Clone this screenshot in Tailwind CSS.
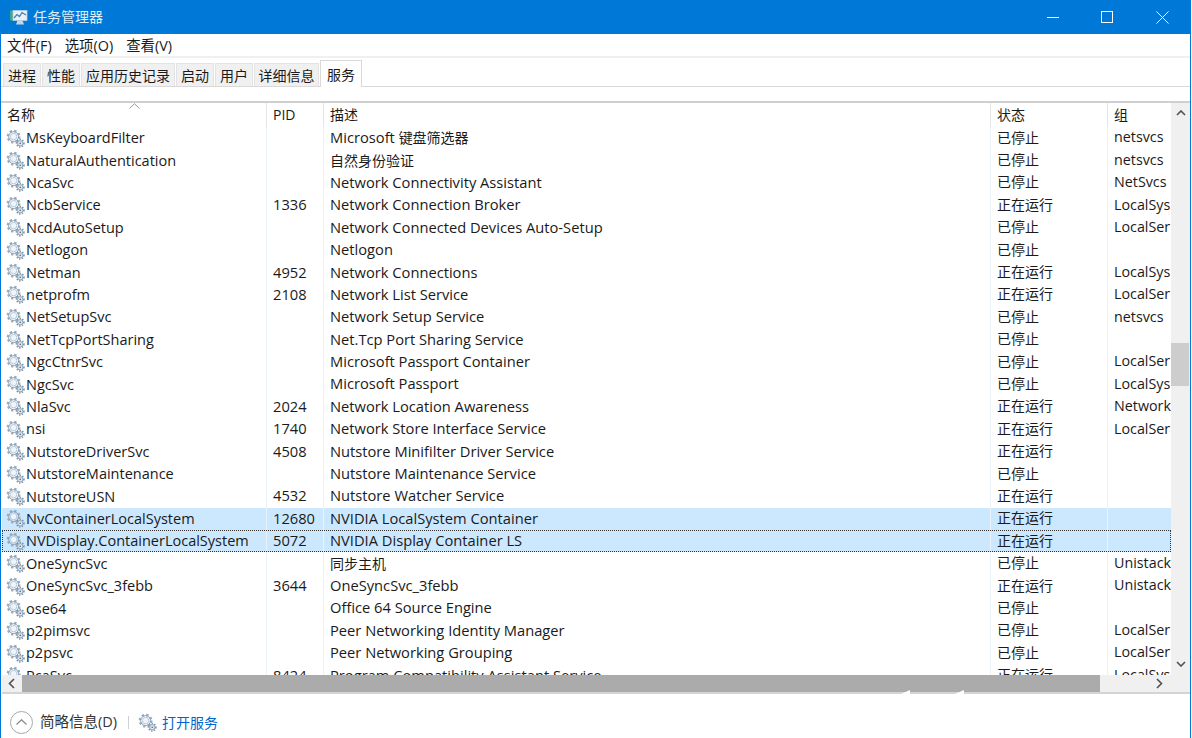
<!DOCTYPE html>
<html lang="zh-CN">
<head>
  <meta charset="UTF-8" />
  <title>任务管理器</title>
  <script src="https://cdn.jsdelivr.net/npm/@tailwindcss/browser@4"></script>
</head>
<body class="bg-white overflow-hidden font-['Open_Sans','Noto_Sans_CJK_SC',sans-serif] text-[14px] text-[#1a1a1a]">
  <svg class="hidden">
    <symbol id="gears" viewBox="0 0 20 20">
      <circle cx="8" cy="8" r="6" fill="none" stroke="#9aacbd" stroke-width="2.6" stroke-dasharray="2.4 2.3"/>
      <circle cx="8" cy="8" r="5.2" fill="none" stroke="#8a9fb3" stroke-width="1"/>
      <circle cx="8" cy="8" r="3.4" fill="#eef4fa" stroke="#b4c6d6" stroke-width="1"/>
      <circle cx="15" cy="15" r="3.8" fill="none" stroke="#7f94a9" stroke-width="1.8" stroke-dasharray="1.4 1.4"/>
      <circle cx="15" cy="15" r="2.8" fill="#dfe8f1" stroke="#8a9fb3" stroke-width="1"/>
      <circle cx="15" cy="15" r="0.9" fill="#5d7388"/>
    </symbol>
  </svg>

  <div class="w-[1191px] h-[738px] flex flex-col border-x border-[#0078d7]">
    <!-- title bar -->
    <div class="h-[34px] shrink-0 bg-[#0078d7] flex items-center text-white">
      <svg class="w-[19px] h-[17px] ml-[8px]" viewBox="0 0 19 17">
        <rect x="1" y="1.5" width="3" height="10" fill="#3fa58f"/>
        <rect x="4" y="1.5" width="14" height="10" fill="#e9f1f8" stroke="#b9cad9" stroke-width="0.8"/>
        <path d="M5 9 L8 5.5 L10.5 7.5 L13 3.5 L17 6" fill="none" stroke="#3d7fb8" stroke-width="1.2"/>
        <path d="M7 15.5 H15 L13.5 11.5 H8.500 Z" fill="#c9d6e2"/>
      </svg>
      <span class="ml-[5px] pb-[1px] text-[14px] text-[#dcecf9]">任务管理器</span>
      <div class="ml-auto flex items-center">
        <svg class="w-[12px] h-[12px] mr-[42px]" viewBox="0 0 12 12"><path d="M0 6.500H12" stroke="#fff" stroke-width="1"/></svg>
        <svg class="w-[12px] h-[12px] mr-[43px]" viewBox="0 0 12 12"><rect x="0.500" y="0.500" width="11" height="11" fill="none" stroke="#fff"/></svg>
        <svg class="w-[13px] h-[13px] mr-[21px]" viewBox="0 0 13 13"><path d="M0.500 0.500L12.500 12.500M12.500 0.500L0.500 12.500" stroke="#fff" stroke-width="1"/></svg>
      </div>
    </div>

    <!-- menu -->
    <div class="h-[24px] shrink-0 flex items-center gap-[13px] pl-[6px] pt-[2px] border-b-2 border-[#f0f0f0] text-[14.4px]">
      <span>文件(F)</span><span>选项(O)</span><span>查看(V)</span>
    </div>

    <!-- tabs -->
    <div class="h-[29px] shrink-0 flex items-end pl-[2px] gap-px border-b border-[#d9d9d9]">
      <div class="h-[23px] w-[38px] bg-[#f0f0f0] border border-b-0 border-[#e3e3e3] flex items-center justify-center">进程</div>
      <div class="h-[23px] w-[38px] bg-[#f0f0f0] border border-b-0 border-[#e3e3e3] flex items-center justify-center">性能</div>
      <div class="h-[23px] w-[94px] bg-[#f0f0f0] border border-b-0 border-[#e3e3e3] flex items-center justify-center">应用历史记录</div>
      <div class="h-[23px] w-[38px] bg-[#f0f0f0] border border-b-0 border-[#e3e3e3] flex items-center justify-center">启动</div>
      <div class="h-[23px] w-[38px] bg-[#f0f0f0] border border-b-0 border-[#e3e3e3] flex items-center justify-center">用户</div>
      <div class="h-[23px] w-[65px] bg-[#f0f0f0] border border-b-0 border-[#e3e3e3] flex items-center justify-center">详细信息</div>
      <div class="h-[27px] w-[42px] -mb-px bg-white border border-b-0 border-[#d9d9d9] flex items-center justify-center">服务</div>
    </div>

    <div class="h-[16px] shrink-0 border-b-2 border-[#cfcfcf]"></div>

    <!-- table + scrollbars -->
    <div class="relative h-[591px] shrink-0 flex flex-col border-b-2 border-[#d4d4d4] ml-[1px]">
      <div class="flex h-[572px] shrink-0">
        <div class="w-[1169px] flex flex-col relative overflow-hidden">
          <div class="h-[24px] shrink-0 grid grid-cols-[265px_57px_667px_117px_63px] items-stretch">
            <div class="pl-[5px] pb-[2px] flex items-center border-r border-[#e5e5e5]">名称</div>
            <div class="pl-[6px] pb-[2px] flex items-center border-r border-[#e5e5e5]">PID</div>
            <div class="pl-[6px] pb-[2px] flex items-center border-r border-[#e5e5e5]">描述</div>
            <div class="pl-[6px] pb-[2px] flex items-center border-r border-[#e5e5e5]">状态</div>
            <div class="pl-[6px] pb-[2px] flex items-center">组</div>
          </div>
          <svg class="absolute left-[127px] top-0 w-[11px] h-[6px]" viewBox="0 0 11 6"><path d="M0.500 5.500L5.500 0.700L10.500 5.500" fill="none" stroke="#9a9a9a"/></svg>
          <div id="rows" class="flex-1 overflow-hidden"></div>
        </div>
        <!-- vertical scrollbar -->
        <div class="w-[19px] bg-[#f0f0f0] flex flex-col items-center justify-between pt-[7px] pb-[8px] relative">
          <svg class="w-[10px] h-[6px]" viewBox="0 0 10 6"><path d="M1 5L5 1L9 5" fill="none" stroke="#505050" stroke-width="1.600"/></svg>
          <div class="absolute left-0 top-[240px] w-[18px] h-[43px] bg-[#cdcdcd]"></div>
          <svg class="w-[10px] h-[6px]" viewBox="0 0 10 6"><path d="M1 1L5 5L9 1" fill="none" stroke="#505050" stroke-width="1.600"/></svg>
        </div>
      </div>
      <!-- horizontal scrollbar -->
      <div class="h-[17px] bg-[#f0f0f0] flex items-center shrink-0">
        <div class="w-[20px] pr-[2px] flex justify-center">
          <svg class="w-[7px] h-[11px]" viewBox="0 0 7 11"><path d="M6 1L1.500 5.500L6 10" fill="none" stroke="#505050" stroke-width="1.600"/></svg>
        </div>
        <div class="w-[1078px] h-full bg-[#ababab]"></div>
        <div class="ml-auto w-[20px] mr-[21px] flex justify-center">
          <svg class="w-[7px] h-[11px]" viewBox="0 0 7 11"><path d="M1 1L5.500 5.500L1 10" fill="none" stroke="#505050" stroke-width="1.600"/></svg>
        </div>
      </div>
      <div class="absolute left-[899px] bottom-[-2px] w-[9px] h-[4px] bg-white [clip-path:polygon(100%_0,100%_100%,0_100%)]"></div>
      <div class="absolute left-[953px] bottom-[-2px] w-[9px] h-[4px] bg-white [clip-path:polygon(100%_0,100%_100%,0_100%)]"></div>
    </div>

    <!-- footer -->
    <div class="flex-1 flex items-center pt-[12px]">
      <div class="ml-[9px] w-[23px] h-[23px] rounded-full border border-[#a8a8a8] flex items-center justify-center">
        <svg class="w-[11px] h-[6px]" viewBox="0 0 11 6"><path d="M0.500 5.500L5.500 0.700L10.500 5.500" fill="none" stroke="#8a8a8a" stroke-width="1.200"/></svg>
      </div>
      <span class="ml-[7px] text-[#333] text-[14.5px]">简略信息(D)</span>
      <div class="ml-[11px] w-px h-[13px] bg-[#d0d0d0]"></div>
      <svg class="ml-[9px] w-[19px] h-[19px]"><use href="#gears"/></svg>
      <span class="ml-[5px] text-[#0066cc]">打开服务</span>
    </div>
  </div>

  <script>
    const STOP = "已停止";
    const RUN = "正在运行";
    const services = [
      ["MsKeyboardFilter", "", 'Microsoft <span class="text-[14px]">键盘筛选器</span>', STOP, "netsvcs"],
      ["NaturalAuthentication", "", '<span class="text-[14px]">自然身份验证</span>', STOP, "netsvcs"],
      ["NcaSvc", "", "Network Connectivity Assistant", STOP, "NetSvcs"],
      ["NcbService", "1336", "Network Connection Broker", RUN, "LocalSys"],
      ["NcdAutoSetup", "", "Network Connected Devices Auto-Setup", STOP, "LocalSer"],
      ["Netlogon", "", "Netlogon", STOP, ""],
      ["Netman", "4952", "Network Connections", RUN, "LocalSys"],
      ["netprofm", "2108", "Network List Service", RUN, "LocalSer"],
      ["NetSetupSvc", "", "Network Setup Service", STOP, "netsvcs"],
      ["NetTcpPortSharing", "", "Net.Tcp Port Sharing Service", STOP, ""],
      ["NgcCtnrSvc", "", "Microsoft Passport Container", STOP, "LocalSer"],
      ["NgcSvc", "", "Microsoft Passport", STOP, "LocalSys"],
      ["NlaSvc", "2024", "Network Location Awareness", RUN, "Network"],
      ["nsi", "1740", "Network Store Interface Service", RUN, "LocalSer"],
      ["NutstoreDriverSvc", "4508", "Nutstore Minifilter Driver Service", RUN, ""],
      ["NutstoreMaintenance", "", "Nutstore Maintenance Service", STOP, ""],
      ["NutstoreUSN", "4532", "Nutstore Watcher Service", RUN, ""],
      ["NvContainerLocalSystem", "12680", "NVIDIA LocalSystem Container", RUN, "", "sel"],
      ["NVDisplay.ContainerLocalSystem", "5072", "NVIDIA Display Container LS", RUN, "", "focus"],
      ["OneSyncSvc", "", '<span class="text-[14px]">同步主机</span>', STOP, "Unistack"],
      ["OneSyncSvc_3febb", "3644", "OneSyncSvc_3febb", RUN, "Unistack"],
      ["ose64", "", "Office 64 Source Engine", STOP, ""],
      ["p2pimsvc", "", "Peer Networking Identity Manager", STOP, "LocalSer"],
      ["p2psvc", "", "Peer Networking Grouping", STOP, "LocalSer"],
      ["PcaSvc", "8424", "Program Compatibility Assistant Service", RUN, "LocalSys"],
    ];

    const rowBase = "h-[22.4px] grid grid-cols-[265px_57px_667px_117px_63px] items-stretch whitespace-nowrap text-[14.7px]";
    const cell = "pl-[6px] pb-[2px] flex items-center overflow-hidden border-r border-[#eaf3fb]";

    document.getElementById("rows").innerHTML = services.map(([name, pid, desc, state, group, mark]) => {
      let tone = "";
      if (mark === "sel") tone = "bg-[#cce8ff]";
      if (mark === "focus") tone = "bg-[#cce8ff] outline-1 outline-dotted outline-[#333] -outline-offset-1";
      return `
        <div class="${rowBase} ${tone}">
          <div class="pl-[4px] flex items-center gap-[1px] overflow-hidden border-r border-[#eaf3fb]">
            <svg class="w-[19px] h-[19px] shrink-0"><use href="#gears"/></svg><span class="text-[14.5px]">${name}</span>
          </div>
          <div class="${cell}">${pid}</div>
          <div class="${cell}"><span class="whitespace-pre">${desc}</span></div>
          <div class="${cell} text-[14px]">${state}</div>
          <div class="pl-[6px] pb-[2px] flex items-center overflow-hidden text-[14.3px]">${group}</div>
        </div>`;
    }).join("");
  </script>
</body>
</html>
